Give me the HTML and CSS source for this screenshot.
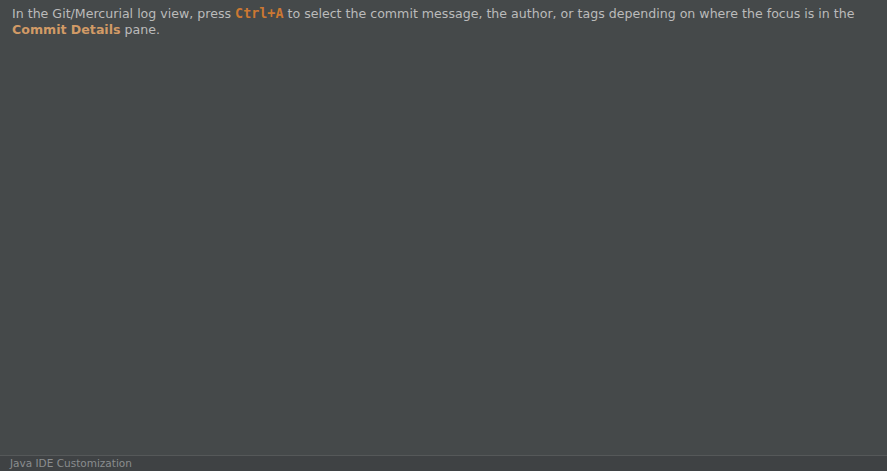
FILE: index.html
```html
<!DOCTYPE html>
<html>
<head>
<meta charset="utf-8">
<link rel="stylesheet" href="styles.css">
</head>
<body>
<div class="page">
  <main class="tip">
    <p class="tip-text">In the Git/Mercurial log view, press <span class="shortcut">Ctrl+A</span> to select the commit message, the author, or tags depending on where the focus is in the <span class="ui-name">Commit Details</span> pane.</p>
  </main>
  <footer class="status">Java IDE Customization</footer>
</div>
</body>
</html>
```
FILE: styles.css
```css
html, body {
  margin: 0;
  padding: 0;
  height: 100%;
  background: #45494a;
}
.page {
  display: flex;
  flex-direction: column;
  height: 471px;
  width: 887px;
}
.tip {
  flex: 1;
  padding: 6px 20px 0 12px;
}
.tip-text {
  margin: 0;
  font-family: "DejaVu Sans", Verdana, sans-serif;
  font-size: 12.6px;
  line-height: 16px;
  color: #bbbbbb;
}
.shortcut {
  font-family: "DejaVu Sans Mono", monospace;
  font-weight: bold;
  font-size: 13.4px;
  line-height: 12px;
  color: #cc7832;
}
.ui-name {
  font-weight: bold;
  color: #d19a66;
}
.status {
  height: 15px;
  border-top: 1px solid #555859;
  background: #3f4244;
  font-family: "DejaVu Sans", sans-serif;
  font-size: 10.5px;
  line-height: 15px;
  color: #8a8d8f;
  padding-left: 10px;
}
```
